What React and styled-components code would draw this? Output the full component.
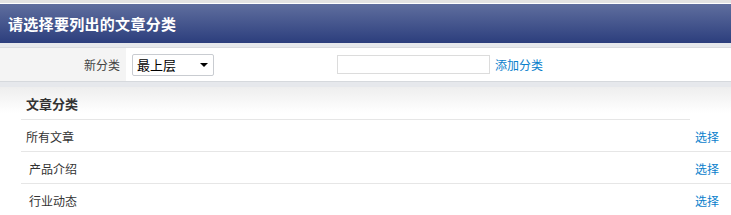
import { Fragment } from "react";
import { styled, createGlobalStyle } from "styled-components";

const GlobalStyle = createGlobalStyle`
  html, body {
    margin: 0;
    padding: 0;
    background: #fff;
  }
  body {
    font-family: "Noto Sans CJK SC", "Liberation Sans", sans-serif;
    font-size: 12px;
    color: #333;
  }
`;

const Page = styled.div`
  width: 731px;
  overflow: hidden;
`;

const TopStrip = styled.div`
  height: 3px;
  background: #e2e2e2;
  border-bottom: 1px solid #fff;
`;

const TitleBar = styled.div`
  height: 39px;
  display: flex;
  align-items: center;
  padding-left: 8px;
  background: linear-gradient(#5f6e9e, #2c3e7d);
  color: #fff;
  font-size: 15px;
  font-weight: bold;
  letter-spacing: 0.3px;
`;

const FormBand = styled.div`
  border-top: 4px solid #e6e8ec;
  border-bottom: 5px solid #e6e8ec;
`;

const FormRow = styled.div`
  display: grid;
  grid-template-columns: 126px 1fr;
  height: 33px;
  border-top: 1px solid #d9dbdf;
  border-bottom: 1px solid #d6d9dd;
`;

const Label = styled.div`
  background: #f4f4f4;
  display: flex;
  align-items: center;
  justify-content: flex-end;
  padding-right: 6px;
  color: #444;
`;

const Field = styled.div`
  background: #fff;
  display: flex;
  align-items: center;
  padding-left: 6px;
`;

const Select = styled.div`
  width: 82px;
  height: 22px;
  box-sizing: border-box;
  border: 1px solid #c9ccd1;
  border-radius: 2px;
  display: flex;
  align-items: center;
  justify-content: space-between;
  padding: 0 5px 0 4px;
  font-size: 13px;
  color: #000;
`;

const Caret = styled.span`
  width: 0;
  height: 0;
  border-left: 4px solid transparent;
  border-right: 4px solid transparent;
  border-top: 4px solid #000;
`;

const TextInput = styled.input`
  margin-left: 123px;
  width: 153px;
  height: 19px;
  box-sizing: border-box;
  border: 1px solid #dcdcdc;
  padding: 0 3px;
  outline: none;
`;

const Link = styled.a`
  color: #0a80cc;
  text-decoration: none;
  cursor: pointer;
  margin-left: ${(p) => p.$gap || 0}px;
  font-size: 12px;
`;

const Section = styled.div`
  background: linear-gradient(#eeeeee 0, #ffffff 26px);
  padding-left: 21px;
`;

const Table = styled.div`
  display: grid;
  grid-template-columns: 669px 41px;
`;

const HeadCell = styled.div`
  height: 33px;
  box-sizing: border-box;
  display: flex;
  align-items: center;
  padding-left: 5px;
  padding-top: 1px;
  font-size: 13px;
  font-weight: bold;
  color: #333;
  border-bottom: 1px solid #e6e6e6;
`;

const Cell = styled.div`
  height: 32px;
  box-sizing: border-box;
  display: flex;
  align-items: center;
  padding-left: ${(p) => p.$indent || 0}px;
  padding-top: 1px;
  border-bottom: 1px solid ${(p) => (p.$last ? "transparent" : "#e6e6e6")};
  color: #333;
`;

const rows = [
  { name: "所有文章", indent: 5 },
  { name: "产品介绍", indent: 8 },
  { name: "行业动态", indent: 8 },
];

export default function App() {
  return (
    <Page>
      <GlobalStyle />
      <TopStrip />
      <TitleBar>请选择要列出的文章分类</TitleBar>
      <FormBand>
        <FormRow>
          <Label>新分类</Label>
          <Field>
            <Select>
              <span>最上层</span>
              <Caret />
            </Select>
            <TextInput type="text" />
            <Link $gap={5}>添加分类</Link>
          </Field>
        </FormRow>
      </FormBand>
      <Section>
        <Table>
          <HeadCell>文章分类</HeadCell>
          <div />
          {rows.map((r, i) => (
            <Fragment key={r.name}>
              <Cell $indent={r.indent} $last={i === rows.length - 1}>
                {r.name}
              </Cell>
              <Cell $indent={5} $last={i === rows.length - 1}>
                <Link>选择</Link>
              </Cell>
            </Fragment>
          ))}
        </Table>
      </Section>
    </Page>
  );
}
